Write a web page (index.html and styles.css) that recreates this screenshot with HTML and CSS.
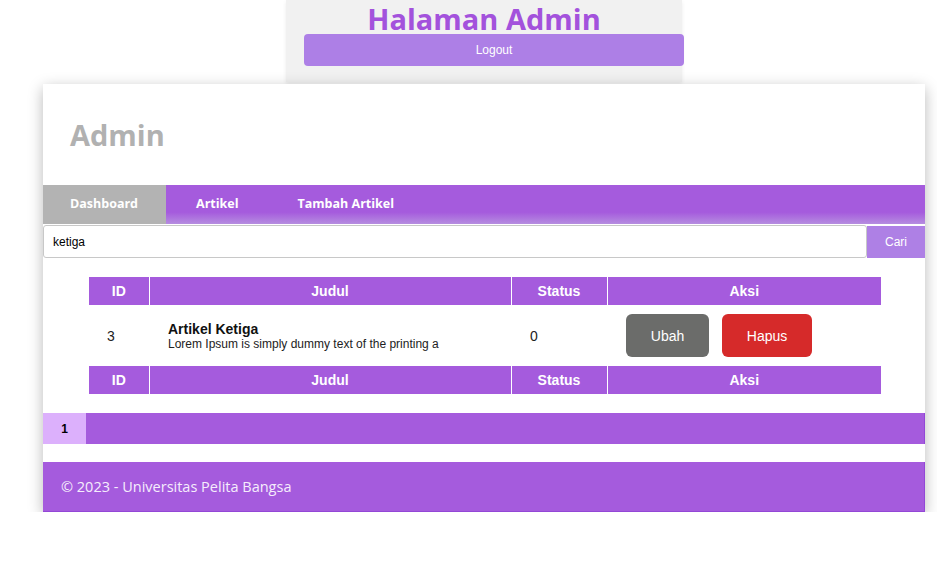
FILE: index.html
```html
<!DOCTYPE html>
<html lang="id">
<head>
<meta charset="utf-8">
<title>Admin</title>
<link rel="stylesheet" href="styles.css">
</head>
<body>
<div class="topbox">
  <h1 class="top-title">Halaman Admin</h1>
  <button class="logout">Logout</button>
</div>
<div class="container">
  <header class="header">
    <h2 class="brand">Admin</h2>
  </header>
  <nav class="nav">
    <a class="nav-item active">Dashboard</a>
    <a class="nav-item">Artikel</a>
    <a class="nav-item">Tambah Artikel</a>
  </nav>
  <form class="search">
    <input class="search-input" type="text" value="ketiga">
    <button class="search-btn" type="button">Cari</button>
  </form>
  <div class="table-wrap">
    <table class="data">
      <colgroup>
        <col class="c-id"><col class="c-judul"><col class="c-status"><col class="c-aksi">
      </colgroup>
      <thead>
        <tr><th>ID</th><th>Judul</th><th>Status</th><th>Aksi</th></tr>
      </thead>
      <tbody>
        <tr>
          <td class="cell-id">3</td>
          <td><div class="art-title">Artikel Ketiga</div><div class="art-desc">Lorem Ipsum is simply dummy text of the printing a</div></td>
          <td>0</td>
          <td><div class="actions"><a class="btn btn-edit">Ubah</a><a class="btn btn-del">Hapus</a></div></td>
        </tr>
      </tbody>
      <tfoot>
        <tr><th>ID</th><th>Judul</th><th>Status</th><th>Aksi</th></tr>
      </tfoot>
    </table>
  </div>
  <div class="pagination"><span class="page active">1</span></div>
  <footer class="footer">© 2023 - Universitas Pelita Bangsa</footer>
</div>
</body>
</html>
```
FILE: styles.css
```css
* { box-sizing: border-box; }
html, body { margin: 0; padding: 0; background: #fff; }
body { font-family: "Liberation Sans", Arial, sans-serif; }

.topbox {
  width: 396px;
  height: 82px;
  margin-left: 286px;
  background: #f1f1f1;
  box-shadow: 0 2px 4px rgba(0,0,0,0.08);
  display: flex;
  flex-direction: column;
  align-items: flex-start;
}
.top-title {
  margin: 0 0 -4px 0;
  width: 100%;
  text-align: center;
  font-family: "Open Sans", sans-serif;
  font-weight: 700;
  font-size: 29px;
  line-height: 38px;
  color: #a352dc;
}
.logout {
  position: relative;
  margin-left: 18px;
  width: 380px;
  height: 32px;
  border: 0;
  border-radius: 4px;
  background: #ad7fe6;
  color: #fff;
  font-family: "Liberation Sans", Arial, sans-serif;
  font-size: 12px;
  padding: 0;
}

.container {
  width: 882px;
  margin: 2px 0 0 43px;
  background: #fff;
  box-shadow: 0 4px 14px rgba(0,0,0,0.28);
}
.header {
  height: 101px;
  padding: 0 27px;
  display: flex;
  align-items: center;
}
.brand {
  margin: 0;
  font-family: "Open Sans", sans-serif;
  font-weight: 700;
  font-size: 29px;
  line-height: 1;
  color: #b1b1b1;
}

.nav {
  height: 39px;
  display: flex;
  background: linear-gradient(to bottom, #a55bdd 0%, #a55bdd 70%, #b68de0 100%);
}
.nav-item {
  display: flex;
  align-items: center;
  padding: 0 29px 3px 30px;
  font-family: "Open Sans", sans-serif;
  font-weight: 700;
  font-size: 12.5px;
  color: #fff;
}
.nav-item.active {
  background: #b3b3b3;
  padding: 0 28px 3px 27px;
}

.search {
  display: flex;
  margin: 1px 0 0 0;
  height: 32px;
}
.search-input {
  flex: 1;
  height: 33px;
  border: 1px solid #c8c8c8;
  border-radius: 3px;
  padding: 0 9px;
  font-family: "Liberation Sans", Arial, sans-serif;
  font-size: 12px;
  color: #000;
  outline: none;
}
.search-btn {
  width: 58px;
  height: 32px;
  margin-top: 1px;
  border: 0;
  background: #ae80e5;
  color: #fff;
  font-family: "Liberation Sans", Arial, sans-serif;
  font-size: 12px;
  padding: 0;
}

.table-wrap {
  padding: 20px 44px 0 46px;
}
.data {
  width: 792px;
  border-collapse: collapse;
  table-layout: fixed;
}
.c-id { width: 60px; }
.c-judul { width: 362px; }
.c-status { width: 96px; }
.c-aksi { width: 274px; }
.data th {
  background: #a55bdd;
  color: #fff;
  font-weight: 700;
  font-size: 14px;
  height: 28px;
  padding: 0;
  text-align: center;
  border-left: 1px solid #fff;
}
.data th:first-child { border-left: 0; }
.data td {
  height: 61px;
  padding: 0 0 0 19px;
  font-size: 14px;
  color: #222;
  vertical-align: middle;
}
.data td.cell-id { padding-left: 18px; }
.art-title {
  font-weight: 700;
  font-size: 14px;
  color: #111;
  line-height: 16px;
}
.art-desc {
  font-size: 12px;
  color: #222;
  line-height: 14px;
}
.actions {
  display: flex;
  gap: 13px;
}
.btn {
  display: flex;
  align-items: center;
  justify-content: center;
  height: 43px;
  border-radius: 6px;
  font-size: 14px;
  color: #fff;
}
.btn-edit { width: 83px; background: #6b6c6a; }
.btn-del { width: 90px; background: #d62a2a; }

.pagination {
  margin-top: 19px;
  height: 31px;
  background: #a55bdd;
  display: flex;
  border-right: 1px solid #9347d6;
}
.page {
  width: 43px;
  display: flex;
  align-items: center;
  justify-content: center;
  font-weight: 700;
  font-size: 12px;
  color: #000;
}
.page.active { background: #dcb0fc; }

.footer {
  margin-top: 18px;
  height: 50px;
  background: #a55bdd;
  border-right: 1px solid #9347d6;
  border-bottom: 1px solid #9347d6;
  padding: 0 18px;
  display: flex;
  align-items: center;
  font-family: "Open Sans", sans-serif;
  font-size: 14.5px;
  color: #f5edfc;
}
```
